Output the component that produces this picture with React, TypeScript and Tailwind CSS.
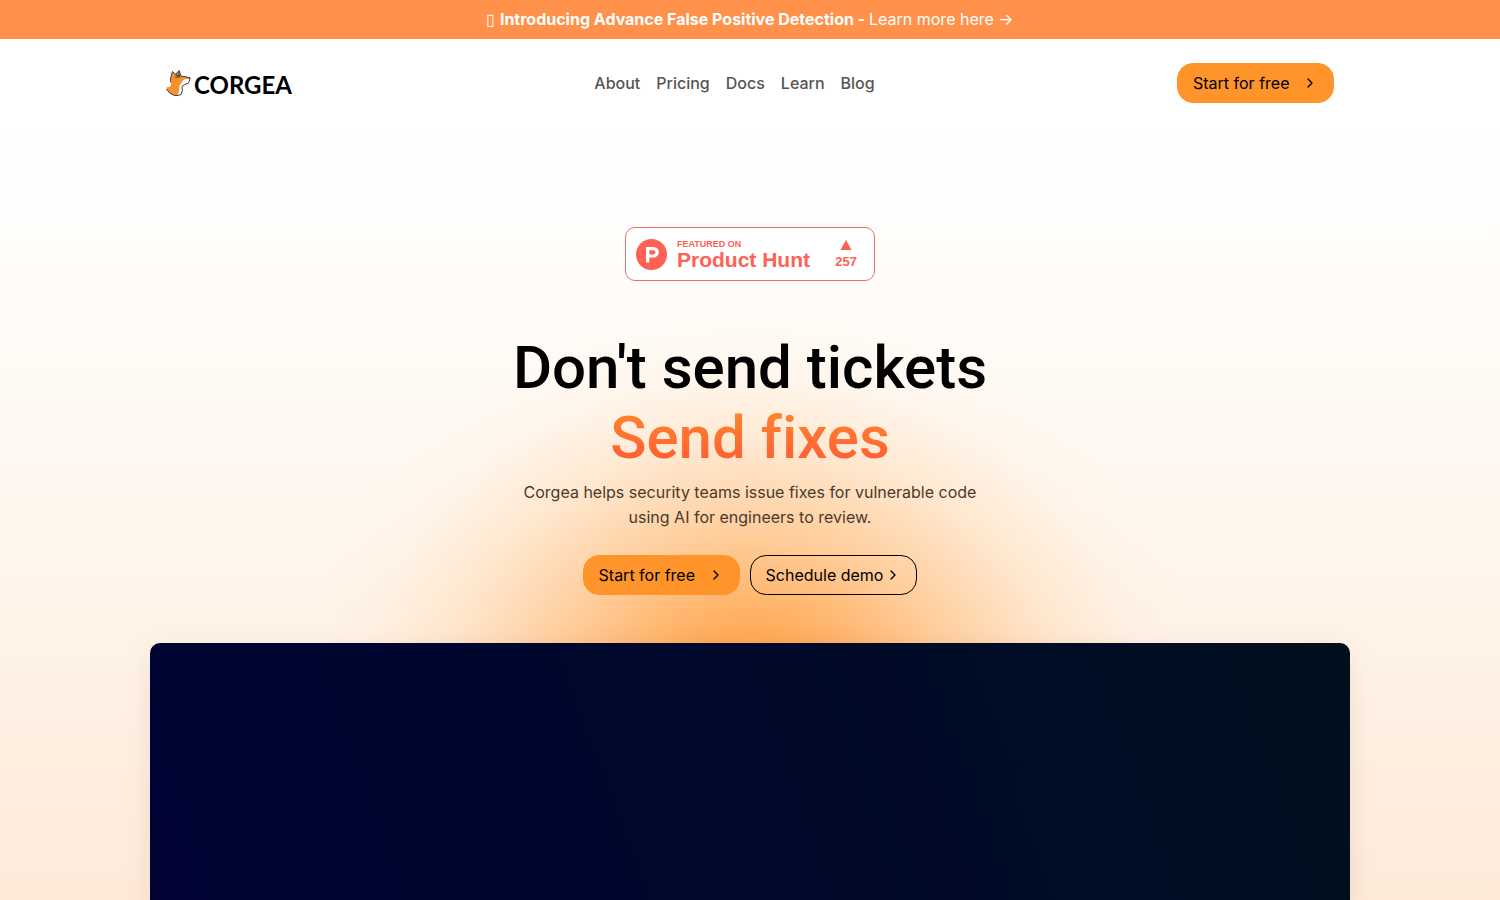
import { ChevronRight } from "lucide-react";
import clsx from "clsx";

const navigation = [
  { name: "About", href: "#about" },
  { name: "Pricing", href: "#pricing" },
  { name: "Docs", href: "#docs" },
  { name: "Learn", href: "#learn" },
  { name: "Blog", href: "#blog" },
];

function Banner() {
  return (
    <div className="bg-[#ff914b] px-4 py-2 text-center leading-[23px] text-white">
      ▯ <strong className="font-bold">Introducing Advance False Positive Detection - </strong>
      <a href="#news">Learn more here →</a>
    </div>
  );
}

function CorgiMark() {
  return (
    <svg viewBox="0 0 26 28" className="h-7 w-[26px]" aria-hidden="true">
      <path
        d="M4.500 11 6.500 2.500 9.500 5.500 13 1.500 15 7 23.500 8.500Q25 10 22 14.500 18 15.200 16 17.500 17 22 15 25.500 12 27 8.500 26.500 3 25 .7 20.500L.7 18Q3 18.800 4.500 17.500Q6 14 4.500 11Z"
        fill="#f9912b"
      />
      <path d="M18 10.500 23.500 9.500Q24 11 22 14.500 18 15.200 16 17.500 17 22 15 25.500L11.500 26.300Q14 21 13.200 17 15 14.500 18 10.500Z" fill="#fff" />
      <path
        d="M4.500 13Q4 10 6.500 2.500L9.500 5.500 13 1.500 15 7 23.500 8.500Q25 10 22 14.500 18 15.200 16 17.500 17 22 15 25.500 12 27 8.500 26.500 3 25 .7 20.500"
        fill="none"
        stroke="#34414c"
        strokeWidth="1"
        strokeLinecap="round"
        strokeLinejoin="round"
      />
      <path
        d="M9.500 5.500 12.500 7M12.800 3 13.200 6.500M9.500 8 14 8M22.800 8.800 23.800 9.500"
        stroke="#34414c"
        strokeWidth="1.100"
        strokeLinecap="round"
      />
    </svg>
  );
}

function Logo() {
  return (
    <a href="#home" className="flex items-end gap-0.5">
      <CorgiMark />
      <span className="font-[Lato,sans-serif] text-2xl leading-6 font-bold text-black">CORGEA</span>
    </a>
  );
}

function PillLink({ href, label, outline }: { href: string; label: string; outline?: boolean }) {
  return (
    <a
      href={href}
      className={clsx(
        "flex h-10 min-w-[157px] items-center justify-between gap-0.5 rounded-2xl border px-[15px] text-black",
        outline ? "border-black" : "border-[#ff942b] bg-[#ff942b]"
      )}
    >
      {label}
      <ChevronRight className="size-4" />
    </a>
  );
}

function Header() {
  return (
    <header className="mx-auto flex w-full max-w-[1200px] items-center justify-between px-4 py-6">
      <Logo />
      <nav className="flex gap-4 font-medium text-[#555]">
        {navigation.map((item) => (
          <a key={item.name} href={item.href}>
            {item.name}
          </a>
        ))}
      </nav>
      <PillLink href="#start" label="Start for free" />
    </header>
  );
}

function ProductHuntBadge() {
  return (
    <a
      href="#product-hunt"
      className="flex h-[54px] w-[250px] items-center rounded-[10px] border border-[#e8706a] bg-white pr-[17px] pl-2.5 font-['Liberation_Sans',Arial,sans-serif] font-bold text-[#ff6154]"
    >
      <svg viewBox="0 0 31 31" className="size-[31px]" aria-hidden="true">
        <circle cx="15.500" cy="15.500" r="15.500" fill="#ff6154" />
        <path
          fillRule="evenodd"
          d="M10 8h7.500a5.300 5.300 0 0 1 0 10.600H13.300V23.500H10ZM13.300 11.200v4.200h4.100a2.100 2.100 0 0 0 0-4.200Z"
          fill="#fff"
        />
      </svg>
      <span className="ml-2.5 flex flex-col pt-0.5">
        <span className="text-[9px] leading-[9px]">FEATURED ON</span>
        <span className="text-[21px] leading-[22px]">Product Hunt</span>
      </span>
      <span className="ml-auto flex flex-col items-center gap-1 pt-0.5">
        <svg viewBox="0 0 12 10" className="h-2.5 w-3" aria-hidden="true">
          <path d="M6 0 11.500 10H.5Z" fill="#ff6154" />
        </svg>
        <span className="text-[13px] leading-4">257</span>
      </span>
    </a>
  );
}

function Hero() {
  return (
    <main className="flex flex-1 flex-col items-center bg-[radial-gradient(450px_390px_at_50%_580px,#ff9a35_0%,#ffa54ce6_20%,#ffb46999_45%,#ffc68c4d_68%,#ffdcb81a_86%,transparent_100%),linear-gradient(#ffffff,#fff7ee_50%,#ffead9)] pt-[100px]">
      <ProductHuntBadge />
      <h1 className="mt-[52px] text-center font-[Roboto,sans-serif] text-6xl leading-[70px] font-medium text-black [font-variant-ligatures:none]">
        Don't send tickets
        <span className="block bg-linear-to-b from-[#ff8a2b] to-[#ff5335] bg-clip-text text-transparent">
          Send fixes
        </span>
      </h1>
      <p className="mt-[7px] max-w-[480px] text-center leading-[25px] text-[#4b3a2c]">
        Corgea helps security teams issue fixes for vulnerable code using AI for engineers to review.
      </p>
      <div className="mt-[25px] flex gap-2.5">
        <PillLink href="#start" label="Start for free" />
        <PillLink href="#demo" label="Schedule demo" outline />
      </div>
      {/* Product video */}
      <div className="mt-12 min-h-[257px] w-full max-w-[1200px] flex-1 rounded-t-[10px] bg-linear-70 from-[#000334] via-[#00082b] to-[#010f1e] shadow-[0_8px_30px_#00000014]" />
    </main>
  );
}

export default function App() {
  return (
    <div className="flex min-h-screen flex-col bg-white font-[Inter,sans-serif] text-base">
      <Banner />
      <Header />
      <Hero />
    </div>
  );
}
